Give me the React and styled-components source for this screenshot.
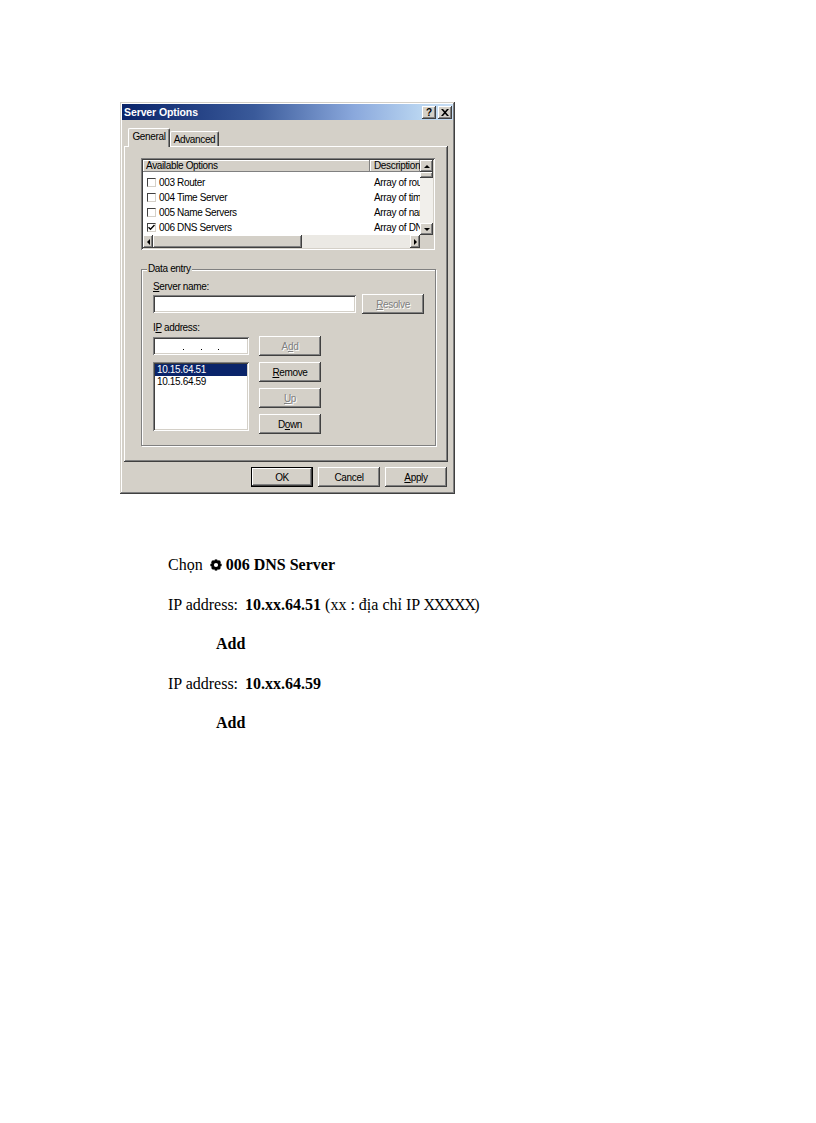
import React from "react";
import styled, { createGlobalStyle, css } from "styled-components";

const GlobalStyle = createGlobalStyle`
    html, body {
        margin: 0;
        padding: 0;
        background: #fff;
    }
`

const raised = css`
    background-color: #d4d0c8;
    box-shadow: inset -1px -1px #404040, inset 1px 1px #fff, inset -2px -2px #808080, inset 2px 2px #d4d0c8;
`
const sunken = css`
    box-shadow: inset 1px 1px #808080, inset -1px -1px #fff, inset 2px 2px #404040, inset -2px -2px #d4d0c8;
`

const Page = styled.div`
    width: 816px;
    min-height: 1123px;
    padding-top: 102px;
    box-sizing: border-box;
`
const Window = styled.div`
    margin-left: 120px;
    width: 335px;
    height: 392px;
    box-sizing: border-box;
    padding: 2px;
    background-color: #d4d0c8;
    box-shadow: inset -1px -1px #404040, inset 1px 1px #d4d0c8, inset -2px -2px #808080, inset 2px 2px #fff;
    font-family: "Liberation Sans", Arial, sans-serif;
    font-size: 10px;
    letter-spacing: -0.35px;
    color: #000;
`
const TitleBar = styled.div`
    height: 16px;
    display: flex;
    align-items: center;
    padding: 0 1px 0 2px;
    background: linear-gradient(to right, #0a246a 0%, #3a5a9a 40%, #8aa8dc 70%, #b8d4f0 90%, #c8def4 100%);
`
const Title = styled.span`
    flex: 1;
    color: #fff;
    font-weight: bold;
    font-size: 10.5px;
    letter-spacing: -0.1px;
`
const CaptionBtn = styled.div`
    width: 14px;
    height: 13px;
    margin-left: ${props => props.$gap}px;
    ${raised};
    display: flex;
    align-items: center;
    justify-content: center;
    font-weight: bold;
    font-size: 10px;
    line-height: 13px;
`
const Body = styled.div`
    padding: 0 5px 0 2px;
`
const TabRow = styled.div`
    margin-top: 8px;
    height: 18px;
    display: flex;
    align-items: flex-end;
    padding-left: 4px;
`
const Tab = styled.div`
    width: ${props => props.$w}px;
    height: ${props => props.$active ? 19 : 15}px;
    box-sizing: border-box;
    background-color: #d4d0c8;
    border-top: 1px solid #fff;
    border-left: 1px solid #fff;
    border-right: 1px solid #404040;
    border-radius: 2px 2px 0 0;
    box-shadow: inset -1px 0 #808080;
    text-align: center;
    line-height: 12px;
    padding-top: 2px;
    white-space: nowrap;
    ${props => props.$active && css`
        margin-bottom: -1px;
        position: relative;
        z-index: 1;
    `}
`
const Panel = styled.div`
    width: 324px;
    height: 316px;
    box-sizing: border-box;
    padding: 12px 0 0 17px;
    ${raised};
`
const ListView = styled.div`
    width: 294px;
    height: 92px;
    box-sizing: border-box;
    padding: 2px;
    background-color: #fff;
    ${sunken};
    display: grid;
    grid-template-columns: 1fr 13px;
    grid-template-rows: 1fr 13px;
`
const ListContent = styled.div`
    overflow: hidden;
`
const HeaderRow = styled.div`
    display: grid;
    grid-template-columns: 227px 1fr;
    height: 12px;
`
const HeaderCell = styled.div`
    ${raised};
    box-shadow: inset -1px -1px #808080, inset 1px 1px #fff;
    line-height: 12px;
    padding-left: ${props => props.$pad}px;
    white-space: nowrap;
    overflow: hidden;
`
const Rows = styled.div`
    margin-top: 3px;
`
const Row = styled.div`
    display: grid;
    grid-template-columns: 227px 1fr;
    height: 15px;
    align-items: center;
`
const OptionCell = styled.div`
    display: flex;
    align-items: center;
    gap: 3px;
    padding-left: 4px;
    white-space: nowrap;
`
const DescCell = styled.div`
    padding-left: 4px;
    white-space: nowrap;
    overflow: hidden;
`
const Check = styled.div`
    width: 9px;
    height: 9px;
    box-sizing: border-box;
    border: 1px solid #404040;
    border-right-color: #d4d0c8;
    border-bottom-color: #d4d0c8;
    background-color: #fff;
    display: flex;
    align-items: center;
    justify-content: center;
`
const VScroll = styled.div`
    background-color: #f1efeb;
    display: flex;
    flex-direction: column;
`
const HScroll = styled.div`
    background-color: #ebe9e4;
    display: flex;
`
const Corner = styled.div`
    background-color: #d4d0c8;
`
const ScrollBtn = styled.div`
    ${raised};
    width: ${props => props.$w || 13}px;
    height: ${props => props.$h || 13}px;
    flex-shrink: 0;
    display: flex;
    align-items: center;
    justify-content: center;
`
const Thumb = styled.div`
    ${raised};
    width: ${props => props.$w || 13}px;
    height: ${props => props.$h || 13}px;
    flex-shrink: 0;
`
const Spacer = styled.div`
    flex: 1;
`
const Arrow = styled.div`
    width: 0;
    height: 0;
    ${props => props.$dir === "up" && css`
        border-left: 3px solid transparent;
        border-right: 3px solid transparent;
        border-bottom: 3px solid #000;
    `}
    ${props => props.$dir === "down" && css`
        border-left: 3px solid transparent;
        border-right: 3px solid transparent;
        border-top: 3px solid #000;
    `}
    ${props => props.$dir === "left" && css`
        border-top: 3px solid transparent;
        border-bottom: 3px solid transparent;
        border-right: 3px solid #000;
    `}
    ${props => props.$dir === "right" && css`
        border-top: 3px solid transparent;
        border-bottom: 3px solid transparent;
        border-left: 3px solid #000;
    `}
`
const GroupBox = styled.div`
    position: relative;
    margin-top: 19px;
    width: 295px;
    height: 177px;
    box-sizing: border-box;
    border: 1px solid #808080;
    box-shadow: 1px 1px 0 #fff, inset 1px 1px 0 #fff;
    padding: 11px 0 0 11px;
`
const Legend = styled.span`
    position: absolute;
    top: -7px;
    left: 5px;
    padding: 0 1px;
    line-height: 12px;
    background-color: #d4d0c8;
`
const FieldLabel = styled.div`
    height: 12px;
    line-height: 12px;
    margin-top: ${props => props.$top || 0}px;
`
const FieldRow = styled.div`
    display: flex;
    align-items: ${props => props.$align || "center"};
    gap: ${props => props.$gap}px;
    margin-top: ${props => props.$top}px;
`
const TextBox = styled.div`
    width: ${props => props.$w}px;
    height: 18px;
    background-color: #fff;
    ${sunken};
`
const Column = styled.div`
    display: flex;
    flex-direction: column;
    gap: ${props => props.$gap || 0}px;
    width: ${props => props.$w ? props.$w + "px" : "auto"};
`
const IpBox = styled.div`
    margin-top: 1px;
    height: 18px;
    background-color: #fff;
    ${sunken};
    display: flex;
    align-items: flex-end;
    justify-content: space-evenly;
    padding: 0 14px 5px;
    box-sizing: border-box;
`
const Dot = styled.span`
    width: 1px;
    height: 1px;
    background-color: #000;
`
const ListBox = styled.div`
    margin-top: 7px;
    height: 69px;
    box-sizing: border-box;
    padding: 2px;
    background-color: #fff;
    ${sunken};
`
const ListItem = styled.div`
    height: 12px;
    line-height: 12px;
    padding-left: 2px;
    background-color: ${props => props.$selected ? "#0a246a" : "transparent"};
    color: ${props => props.$selected ? "#fff" : "#000"};
`
const Button = styled.div`
    width: 62px;
    height: 20px;
    flex-shrink: 0;
    ${raised};
    display: flex;
    align-items: center;
    justify-content: center;
    color: ${props => props.$disabled ? "#808080" : "#000"};
    text-shadow: ${props => props.$disabled ? "1px 1px 0 #fff" : "none"};
    ${props => props.$default && css`
        box-shadow: inset 0 0 0 1px #000, inset -2px -2px #404040, inset 2px 2px #fff, inset -3px -3px #808080;
    `}
`
const U = styled.span`
    text-decoration: underline;
`
const Footer = styled.div`
    display: flex;
    justify-content: flex-end;
    gap: 5px;
    margin-top: 5px;
    padding-right: 1px;
`

const Notes = styled.div`
    margin-top: 61px;
    padding-left: 168px;
    font-family: "Liberation Serif", "Times New Roman", serif;
    font-size: 16px;
    color: #000;
`
const Line = styled.p`
    margin: 0 0 19.5px;
    line-height: 20px;
    height: 20px;
    padding-left: ${props => props.$indent || 0}px;
    white-space: nowrap;
`
const B = styled.b`
    font-weight: bold;
`
const Gap = styled.span`
    display: inline-block;
    width: ${props => props.$w}px;
`
const Xs = styled.span`
    letter-spacing: -1.4px;
`
const IconWrap = styled.span`
    display: inline-block;
    vertical-align: -1px;
    line-height: 0;
`

function GearIcon() {
    const petals = [];
    for (let i = 0; i < 8; i++) {
        const a = (i * Math.PI) / 4;
        petals.push(<circle key={i} cx={6 + Math.cos(a) * 4} cy={6 + Math.sin(a) * 4} r="1.8" fill="#000" />);
    }
    return (
        <IconWrap>
            <svg width="12" height="12" viewBox="0 0 12 12">
                <circle cx="6" cy="6" r="4.2" fill="#000" />
                {petals}
                <circle cx="6" cy="6" r="2.1" fill="#fff" />
            </svg>
        </IconWrap>
    );
}

const OPTIONS = [
    { name: "003 Router", desc: "Array of router addresses" },
    { name: "004 Time Server", desc: "Array of time server addresses" },
    { name: "005 Name Servers", desc: "Array of name servers" },
    { name: "006 DNS Servers", desc: "Array of DNS servers", checked: true },
];

export default function App() {
    return (
        <Page>
            <GlobalStyle />
            <Window>
                <TitleBar>
                    <Title>Server Options</Title>
                    <CaptionBtn $gap={0}>?</CaptionBtn>
                    <CaptionBtn $gap={2}>
                        <svg width="8" height="7" viewBox="0 0 8 7">
                            <path d="M0 0h2l2 2.3L6 0h2L5 3.5 8 7H6L4 4.7 2 7H0l3-3.5z" fill="#000" />
                        </svg>
                    </CaptionBtn>
                </TitleBar>
                <Body>
                    <TabRow>
                        <Tab $active $w={42}>General</Tab>
                        <Tab $w={49}>Advanced</Tab>
                    </TabRow>
                    <Panel>
                        <ListView>
                            <ListContent>
                                <HeaderRow>
                                    <HeaderCell $pad={3}>Available Options</HeaderCell>
                                    <HeaderCell $pad={4}>Description</HeaderCell>
                                </HeaderRow>
                                <Rows>
                                    {OPTIONS.map(o => (
                                        <Row key={o.name}>
                                            <OptionCell>
                                                <Check>
                                                    {o.checked && (
                                                        <svg width="7" height="7" viewBox="0 0 7 7">
                                                            <path d="M0.5 3.2l2 2 4-4.2" stroke="#000" strokeWidth="1.4" fill="none" />
                                                        </svg>
                                                    )}
                                                </Check>
                                                {o.name}
                                            </OptionCell>
                                            <DescCell>{o.desc}</DescCell>
                                        </Row>
                                    ))}
                                </Rows>
                            </ListContent>
                            <VScroll>
                                <ScrollBtn $h={12}><Arrow $dir="up" /></ScrollBtn>
                                <Thumb $h={6} />
                                <Spacer />
                                <ScrollBtn $h={12}><Arrow $dir="down" /></ScrollBtn>
                            </VScroll>
                            <HScroll>
                                <ScrollBtn $w={10}><Arrow $dir="left" /></ScrollBtn>
                                <Thumb $w={149} />
                                <Spacer />
                                <ScrollBtn $w={10}><Arrow $dir="right" /></ScrollBtn>
                            </HScroll>
                            <Corner />
                        </ListView>
                        <GroupBox>
                            <Legend>Data entry</Legend>
                            <FieldLabel><U>S</U>erver name:</FieldLabel>
                            <FieldRow $gap={6} $top={1}>
                                <TextBox $w={203} />
                                <Button $disabled><U>R</U>esolve</Button>
                            </FieldRow>
                            <FieldLabel $top={8}>I<U>P</U> address:</FieldLabel>
                            <FieldRow $gap={10} $top={2} $align="flex-start">
                                <Column $w={96}>
                                    <IpBox><Dot /><Dot /><Dot /></IpBox>
                                    <ListBox>
                                        <ListItem $selected>10.15.64.51</ListItem>
                                        <ListItem>10.15.64.59</ListItem>
                                    </ListBox>
                                </Column>
                                <Column $gap={6}>
                                    <Button $disabled>A<U>d</U>d</Button>
                                    <Button><U>R</U>emove</Button>
                                    <Button $disabled><U>U</U>p</Button>
                                    <Button>D<U>o</U>wn</Button>
                                </Column>
                            </FieldRow>
                        </GroupBox>
                    </Panel>
                    <Footer>
                        <Button $default>OK</Button>
                        <Button>Cancel</Button>
                        <Button><U>A</U>pply</Button>
                    </Footer>
                </Body>
            </Window>
            <Notes>
                <Line>Chọn<Gap $w={7} /><GearIcon /><Gap $w={4} /><B>006 DNS Server</B></Line>
                <Line>IP address:<Gap $w={7} /><B>10.xx.64.51</B> (xx : địa chỉ IP <Xs>XXXXX</Xs>)</Line>
                <Line $indent={48}><B>Add</B></Line>
                <Line>IP address:<Gap $w={7} /><B>10.xx.64.59</B></Line>
                <Line $indent={48}><B>Add</B></Line>
            </Notes>
        </Page>
    );
}
